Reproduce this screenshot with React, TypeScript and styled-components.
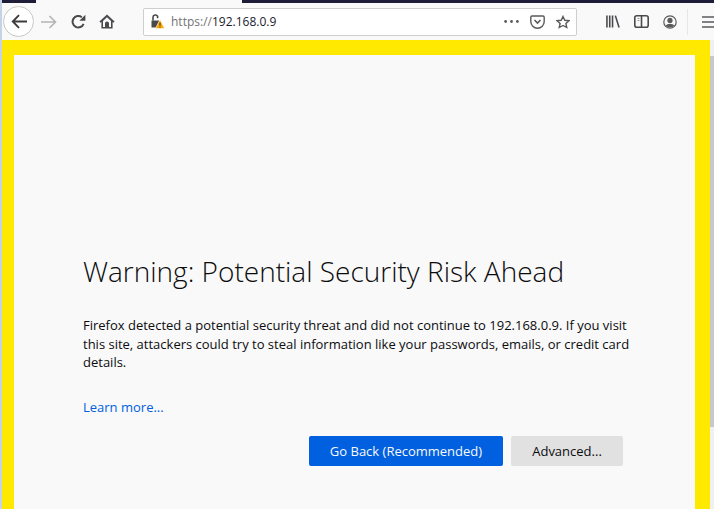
import styled, { createGlobalStyle } from 'styled-components';

const GlobalStyle = createGlobalStyle`
  html, body {
    margin: 0;
    padding: 0;
    height: 100%;
    overflow: hidden;
    background: #f9f9fa;
  }
`;

const Window = styled.div`
  display: flex;
  flex-direction: column;
  box-sizing: border-box;
  width: 714px;
  height: 509px;
  border-left: 2px solid #c6d3e6;
  font-family: 'Open Sans', 'Noto Sans', sans-serif;
  overflow: hidden;
`;

const TabStrip = styled.div`
  display: flex;
  justify-content: space-between;
  flex: none;
  height: 3px;
  background: #f9f9fa;
`;

const TabEdge = styled.div<{ $width: number }>`
  width: ${(p) => p.$width}px;
  background: #1d1d3a;
`;

const Toolbar = styled.div`
  display: flex;
  align-items: center;
  flex: none;
  height: 37px;
  padding-left: 1px;
  background: #f9f9fa;
`;

const BackButton = styled.div`
  display: flex;
  align-items: center;
  justify-content: center;
  flex: none;
  box-sizing: border-box;
  width: 31px;
  height: 31px;
  border: 1px solid #c8c8c8;
  border-radius: 50%;
  background: #fff;
`;

const NavButton = styled.div<{ $ml: number }>`
  display: flex;
  align-items: center;
  justify-content: center;
  flex: none;
  width: 18px;
  height: 18px;
  margin-left: ${(p) => p.$ml}px;
`;

const UrlBar = styled.div`
  display: flex;
  align-items: center;
  flex: none;
  box-sizing: border-box;
  width: 434px;
  height: 28px;
  margin-left: 27px;
  padding: 0 6px 0 7px;
  border: 1px solid #cfcfd1;
  border-radius: 2px;
  background: #fff;
`;

const UrlText = styled.div`
  flex: 1;
  margin-left: 6px;
  font-size: 12px;
  color: #737373;
`;

const UrlHost = styled.span`
  color: #1a1a2e;
`;

const UrlActions = styled.div`
  display: flex;
  align-items: center;
  gap: 11px;
`;

const LibraryGroup = styled.div`
  display: flex;
  align-items: center;
  flex: none;
  gap: 14px;
  height: 26px;
  margin-left: 29px;
  padding-right: 10px;
  border-right: 1px solid #e6e6e6;
`;

const Viewport = styled.div`
  display: flex;
  flex: 1;
  min-height: 0;
`;

const Highlight = styled.div`
  flex: none;
  box-sizing: border-box;
  width: 708px;
  height: 100%;
  padding: 15px 15px 0 12px;
  background: #ffe900;
`;

const Scrollbar = styled.div`
  display: flex;
  flex-direction: column;
  flex: 1;
  padding-top: 16px;
  background: #f0f0f0;
`;

const ScrollThumb = styled.div`
  height: 371px;
  background: #c8c8c8;
`;

const Page = styled.div`
  box-sizing: border-box;
  height: 100%;
  padding: 197px 72px 0 69px;
  background: #f9f9fa;
`;

const Title = styled.h1`
  margin: 0;
  font-size: 28px;
  font-weight: 300;
  line-height: 38px;
  color: #0c0c0d;
`;

const Description = styled.p`
  margin: 26px -12px 0 0;
  font-size: 13px;
  line-height: 18.5px;
  color: #0c0c0d;
`;

const LearnMore = styled.a`
  display: block;
  margin-top: 26px;
  font-size: 13px;
  line-height: 19px;
  color: #0060df;
`;

const Actions = styled.div`
  display: flex;
  justify-content: flex-end;
  gap: 8px;
  margin-top: 19px;
`;

const Button = styled.div<{ $primary?: boolean }>`
  display: flex;
  align-items: center;
  justify-content: center;
  height: 30px;
  width: ${(p) => (p.$primary ? '194px' : '112px')};
  border-radius: 2px;
  font-size: 13px;
  color: ${(p) => (p.$primary ? '#f9f9fa' : '#0c0c0d')};
  background: ${(p) => (p.$primary ? '#0060df' : '#e1e1e2')};
`;

const iconColor = '#4a4a4c';

const App = () => (
  <Window>
    <GlobalStyle />
    <TabStrip>
      <TabEdge $width={34} />
      <TabEdge $width={472} />
    </TabStrip>
    <Toolbar>
      <BackButton>
        <svg width="16" height="15" viewBox="0 0 16 15" fill="none" stroke="#3c3c3e" strokeWidth="1.9">
          <path d="M16 7.5H2M8 1.2 1.8 7.5 8 13.8" />
        </svg>
      </BackButton>
      <NavButton $ml={6}>
        <svg width="16" height="14" viewBox="0 0 16 14" fill="none" stroke="#b4b4b6" strokeWidth="1.6">
          <path d="M0 7H14M8.5 1 14.5 7 8.5 13" />
        </svg>
      </NavButton>
      <NavButton $ml={11}>
        <svg width="15" height="15" viewBox="0 0 15 15">
          <path d="M12.6 9.8A5.7 5.7 0 1 1 10.8 3.2" fill="none" stroke={iconColor} strokeWidth="2" />
          <path d="M14.4 .8V6.8H8.4Z" fill={iconColor} />
        </svg>
      </NavButton>
      <NavButton $ml={11}>
        <svg width="16" height="15" viewBox="0 0 16 15">
          <path d="M8 .5 .4 7.5 1.6 8.8 2.4 8.1V14.5H13.6V8.1L14.4 8.8 15.6 7.5Z" fill={iconColor} />
          <path d="M8 3.2 4 6.9V13H6V9.4A2 2 0 0 1 10 9.4V13H12V6.9Z" fill="#f9f9fa" />
        </svg>
      </NavButton>
      <UrlBar>
        <svg width="14" height="15" viewBox="0 0 14 15">
          <path d="M0.5 6.5H8V13.5H0.5Z" fill="#4a4a4c" />
          <path d="M2 6.5V3.4A2.4 2.4 0 0 1 6.6 2.4V4.2" fill="none" stroke="#4a4a4c" strokeWidth="1.6" />
          <path d="M9 5.5 13.6 14.6H4.4Z" fill="#ffa900" stroke="#fff" strokeWidth="0.6" />
          <path d="M9 8.5V11.8M9 12.5V13.6" stroke="#40300a" strokeWidth="1" />
        </svg>
        <UrlText>
          https://<UrlHost>192.168.0.9</UrlHost>
        </UrlText>
        <UrlActions>
          <svg width="15" height="3" viewBox="0 0 15 3" fill="#5a5a5c">
            <circle cx="1.6" cy="1.5" r="1.4" />
            <circle cx="7.5" cy="1.5" r="1.4" />
            <circle cx="13.4" cy="1.5" r="1.4" />
          </svg>
          <svg width="15" height="14" viewBox="0 0 15 14" fill="none" stroke="#5a5a5c" strokeWidth="1.4">
            <path d="M2 1H13A1.2 1.2 0 0 1 14.2 2.2V6.5A6.7 6.7 0 0 1 .8 6.5V2.2A1.2 1.2 0 0 1 2 1Z" />
            <path d="M4.5 5 7.5 8 10.5 5" strokeWidth="1.6" />
          </svg>
          <svg width="14" height="14" viewBox="0 0 16 15" fill="none" stroke="#5a5a5c" strokeWidth="1.6">
            <path d="M8 1.2 10 5.5 14.8 6 11.3 9.2 12.3 13.8 8 11.5 3.7 13.8 4.7 9.2 1.2 6 6 5.5Z" />
          </svg>
        </UrlActions>
      </UrlBar>
      <LibraryGroup>
        <svg width="14" height="13" viewBox="0 0 15 13" fill="none" stroke="#4a4a4c" strokeWidth="1.7">
          <path d="M1 0V13M4 0V13M7 0V13M10 .2 14 13" />
        </svg>
        <svg width="15" height="13" viewBox="0 0 15 13">
          <rect x=".8" y=".8" width="13.4" height="11.4" rx="2" fill="none" stroke="#4a4a4c" strokeWidth="1.6" />
          <path d="M7.5 1V12" stroke="#4a4a4c" strokeWidth="1.6" />
          <path d="M3.5 3.5H5.5M3.5 5.5H5.5" stroke="#9a9a9c" strokeWidth="1" />
        </svg>
        <svg width="14" height="14" viewBox="0 0 14 14">
          <circle cx="7" cy="7" r="6.2" fill="none" stroke="#5a5a5c" strokeWidth="1.2" />
          <circle cx="7" cy="5.4" r="2.6" fill="#5a5a5c" />
          <path d="M2.6 10.6A5 3.4 0 0 1 11.4 10.6 6 6 0 0 1 2.6 10.6Z" fill="#5a5a5c" />
        </svg>
      </LibraryGroup>
      <NavButton $ml={12}>
        <svg width="14" height="12" viewBox="0 0 14 12" stroke="#5a5a5c" strokeWidth="1.6">
          <path d="M0 1H14M0 6H14M0 11H14" />
        </svg>
      </NavButton>
    </Toolbar>
    <Viewport>
      <Highlight>
        <Page>
          <Title>Warning: Potential Security Risk Ahead</Title>
          <Description>
            Firefox detected a potential security threat and did not continue to 192.168.0.9. If you visit this site,
            attackers could try to steal information like your passwords, emails, or credit card details.
          </Description>
          <LearnMore>Learn more...</LearnMore>
          <Actions>
            <Button $primary>Go Back (Recommended)</Button>
            <Button>Advanced...</Button>
          </Actions>
        </Page>
      </Highlight>
      <Scrollbar>
        <ScrollThumb />
      </Scrollbar>
    </Viewport>
  </Window>
);

export default App;
